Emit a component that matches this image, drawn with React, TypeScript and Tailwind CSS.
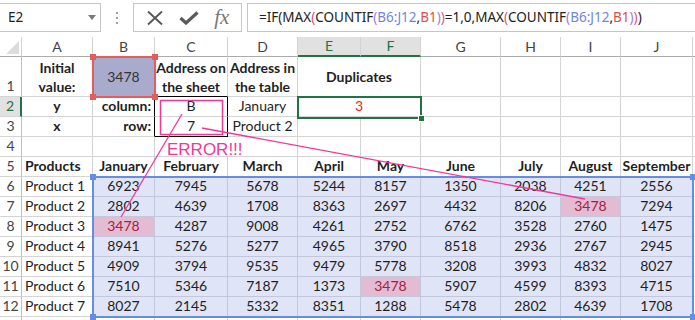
import React from "react"
import { twMerge } from "tailwind-merge"

const months = ["January", "February", "March", "April", "May", "June", "July", "August", "September"]

const data: number[][] = [
  [6923, 7945, 5678, 5244, 8157, 1350, 2038, 4251, 2556],
  [2802, 4639, 1708, 8363, 2697, 4432, 8206, 3478, 7294],
  [3478, 4287, 9008, 4261, 2752, 6762, 3528, 2760, 1475],
  [8941, 5276, 5277, 4965, 3790, 8518, 2936, 2767, 2945],
  [4909, 3794, 9535, 9479, 5778, 3208, 3993, 4832, 8027],
  [7510, 5346, 7187, 1373, 3478, 5907, 4599, 8393, 4715],
  [8027, 2145, 5332, 8351, 1288, 5478, 2802, 4639, 1708],
]

// cells that match B1 (row index, column index)
const hits = ["1-7", "2-0", "5-4"]

const Cell = ({ className, children }: { className?: string; children?: React.ReactNode }) => (
  <div
    className={twMerge(
      "flex items-end justify-center whitespace-nowrap border-b border-r border-[#d4d4d4] px-[3px] text-[#1f1f1f]",
      className
    )}
  >
    {children}
  </div>
)

const RowHead = ({ n, active }: { n?: number; active?: boolean }) => (
  <div
    className={
      active
        ? "flex items-end justify-center border-b border-r-2 border-b-[#d4d4d4] border-r-[#217346] bg-[#e1e1e1] text-[#217346]"
        : "flex items-end justify-center border-b border-r border-[#d4d4d4] border-r-[#c0c0c0] text-[#444]"
    }
  >
    {n}
  </div>
)

const Paren = ({ c, children }: { c: "max" | "cnt"; children: React.ReactNode }) => (
  <span className={c === "max" ? "text-[#e2537d]" : "text-[#9b7fd8]"}>{children}</span>
)

const Ref = ({ c, children }: { c: "blue" | "red"; children: React.ReactNode }) => (
  <span className={c === "blue" ? "text-[#6f86dc]" : "text-[#e14d4d]"}>{children}</span>
)

const Corner = ({ x, y, color }: { x: number; y: number; color: string }) => (
  <div className={`absolute h-[6px] w-[6px] ${color}`} style={{ left: x - 3, top: y - 3 }} />
)

export default function App() {
  const cols = ["A", "B", "C", "D", "E", "F", "G", "H", "I", "J"]

  return (
    <div className="relative h-[320px] w-[695px] overflow-hidden bg-white font-['Lato',sans-serif]">
      {/* formula bar */}
      <div className="flex h-[37px] items-start pt-[3px] font-['Noto_Sans',sans-serif] text-[13.5px] text-[#222]">
        <div className="flex h-[29px] w-[101px] items-center justify-between border border-l-0 border-[#c6c6c6] pl-[8px] pr-[4px]">
          <span>E2</span>
          <svg width="8" height="5" viewBox="0 0 8 5">
            <path d="M0 0 L8 0 L4 5 Z" fill="#7a7a7a" />
          </svg>
        </div>
        <div className="flex h-[29px] w-[32px] flex-col items-center justify-center gap-[3px]">
          <div className="h-[2px] w-[2px] bg-[#a0a0a0]" />
          <div className="h-[2px] w-[2px] bg-[#a0a0a0]" />
          <div className="h-[2px] w-[2px] bg-[#a0a0a0]" />
        </div>
        <div className="flex h-[29px] w-[109px] items-center justify-around border border-[#c6c6c6] px-[4px]">
          <svg width="18" height="16" viewBox="0 0 18 16">
            <path d="M2 1.5 L16 14.5 M16 1.5 L2 14.5" stroke="#555" strokeWidth="1.8" fill="none" />
          </svg>
          <svg width="20" height="14" viewBox="0 0 20 14">
            <path d="M1.5 7 L7 12 L18.5 1.5" stroke="#5a5a5a" strokeWidth="3.2" fill="none" />
          </svg>
          <span className="font-['Liberation_Serif',serif] text-[21px] italic leading-none text-[#777]">fx</span>
        </div>
        <div className="ml-[5px] flex h-[29px] flex-1 items-center border border-r-0 border-[#c6c6c6] pl-[11px] whitespace-nowrap">
          =IF(MAX<Paren c="max">(</Paren>COUNTIF<Paren c="cnt">(</Paren>
          <Ref c="blue">B6:J12</Ref>,<Ref c="red">B1</Ref>
          <Paren c="cnt">)</Paren>
          <Paren c="max">)</Paren>=1,0,MAX<Paren c="max">(</Paren>COUNTIF<Paren c="cnt">(</Paren>
          <Ref c="blue">B6:J12</Ref>,<Ref c="red">B1</Ref>
          <Paren c="cnt">)</Paren>
          <Paren c="max">)</Paren>)
        </div>
      </div>

      {/* sheet */}
      <div className="grid grid-cols-[22px_71px_62px_73px_70px_63px_60px_80px_60px_60px_72px_2px] grid-rows-[20px_40px_repeat(12,20px)] text-[14px] leading-[20px]">
        {/* column headers */}
        <div className="flex items-end justify-end border-b border-r border-[#d4d4d4] border-b-[#ababab] p-[2px]">
          <svg width="13" height="13" viewBox="0 0 13 13">
            <path d="M13 0 L13 13 L0 13 Z" fill="#dcdcdc" />
          </svg>
        </div>
        {cols.map((c) => (
          <div
            key={c}
            className={
              c === "E" || c === "F"
                ? "flex items-center justify-center border-b-2 border-r border-r-[#d4d4d4] border-b-[#217346] bg-[#e1e1e1] text-[#217346]"
                : "flex items-center justify-center border-b border-r border-[#d4d4d4] border-b-[#ababab] text-[#444]"
            }
          >
            {c}
          </div>
        ))}
        <div className="border-b border-[#ababab]" />

        {/* row 1 */}
        <RowHead n={1} />
        <Cell className="items-center text-center font-bold leading-[19px]">
          Initial
          <br />
          value:
        </Cell>
        <Cell className="items-center bg-[#a9abcc] text-[#333]">3478</Cell>
        <Cell className="items-center border-b-black text-center font-bold leading-[19px]">
          Address on
          <br />
          the sheet
        </Cell>
        <Cell className="items-center text-center font-bold leading-[19px]">
          Address in
          <br />
          the table
        </Cell>
        <Cell className="col-span-2 items-center font-bold">Duplicates</Cell>
        <Cell />
        <Cell />
        <Cell />
        <Cell />
        <Cell className="border-r-0" />

        {/* row 2 */}
        <RowHead n={2} active />
        <Cell className="font-bold">y</Cell>
        <Cell className="justify-end border-r-black font-bold">column:</Cell>
        <Cell className="border-r-black">B</Cell>
        <Cell>January</Cell>
        <Cell className="col-span-2 text-[#f21d1d]">3</Cell>
        <Cell />
        <Cell />
        <Cell />
        <Cell />
        <Cell className="border-r-0" />

        {/* row 3 */}
        <RowHead n={3} />
        <Cell className="font-bold">x</Cell>
        <Cell className="justify-end border-r-black font-bold">row:</Cell>
        <Cell className="border-b-black border-r-black">7</Cell>
        <Cell>Product 2</Cell>
        <Cell />
        <Cell />
        <Cell />
        <Cell />
        <Cell />
        <Cell />
        <Cell className="border-r-0" />

        {/* row 4 */}
        <RowHead n={4} />
        <Cell />
        <Cell />
        <Cell className="justify-start border-r-0 pl-[12px] font-['Liberation_Sans',sans-serif] text-[17px] leading-[12px] text-[#f0389a]">
          ERROR!!!
        </Cell>
        <Cell />
        <Cell />
        <Cell />
        <Cell />
        <Cell />
        <Cell />
        <Cell />
        <Cell className="border-r-0" />

        {/* row 5 */}
        <RowHead n={5} />
        <Cell className="justify-start font-bold">Products</Cell>
        {months.map((m) => (
          <Cell key={m} className="font-bold">
            {m}
          </Cell>
        ))}
        <Cell className="border-r-0" />

        {/* rows 6-12 */}
        {data.map((row, r) => (
          <React.Fragment key={r}>
            <RowHead n={r + 6} />
            <Cell className="justify-start">Product {r + 1}</Cell>
            {row.map((v, c) => (
              <Cell
                key={c}
                className={
                  hits.includes(`${r}-${c}`)
                    ? "border-[#c2c7dc] bg-[#e3bcd3] text-[#a3223f]"
                    : "border-[#c2c7dc] bg-[#dfe5f7]"
                }
              >
                {v}
              </Cell>
            ))}
            <Cell className="border-r-0" />
          </React.Fragment>
        ))}

        {/* row 13, only its top edge shows */}
        <RowHead />
        {cols.map((c) => (
          <Cell key={c} />
        ))}
        <Cell className="border-r-0" />
      </div>

      {/* B1 reference highlight */}
      <div className="absolute left-[92px] top-[56px] h-[42px] w-[64px] border-2 border-[#e35d5d]" />
      <Corner x={93} y={57} color="bg-[#e35d5d]" />
      <Corner x={155} y={57} color="bg-[#e35d5d]" />
      <Corner x={93} y={97} color="bg-[#e35d5d]" />
      <Corner x={155} y={97} color="bg-[#e35d5d]" />

      {/* B6:J12 reference highlight */}
      <div className="absolute left-[92px] top-[176px] h-[142px] w-[602px] border-2 border-[#668ce4]" />
      <Corner x={93} y={177} color="bg-[#668ce4]" />
      <Corner x={693} y={177} color="bg-[#668ce4]" />
      <Corner x={93} y={317} color="bg-[#668ce4]" />
      <Corner x={693} y={317} color="bg-[#668ce4]" />

      {/* selection E2:F2 */}
      <div className="absolute left-[297px] top-[96px] h-[23px] w-[125px] border-2 border-[#217346]" />
      <div className="absolute left-[418px] top-[115px] h-[7px] w-[7px] border border-white bg-[#217346]" />

      {/* drawn arrows */}
      <svg className="pointer-events-none absolute left-0 top-0" width="695" height="320">
        <rect x="160.5" y="100.5" width="62" height="34" fill="none" stroke="#f0389a" strokeWidth="1.5" />
        <line x1="182" y1="114" x2="121" y2="217" stroke="#f0389a" strokeWidth="1.3" />
        <line x1="202" y1="128" x2="585" y2="199" stroke="#f0389a" strokeWidth="1.3" />
      </svg>
    </div>
  )
}
